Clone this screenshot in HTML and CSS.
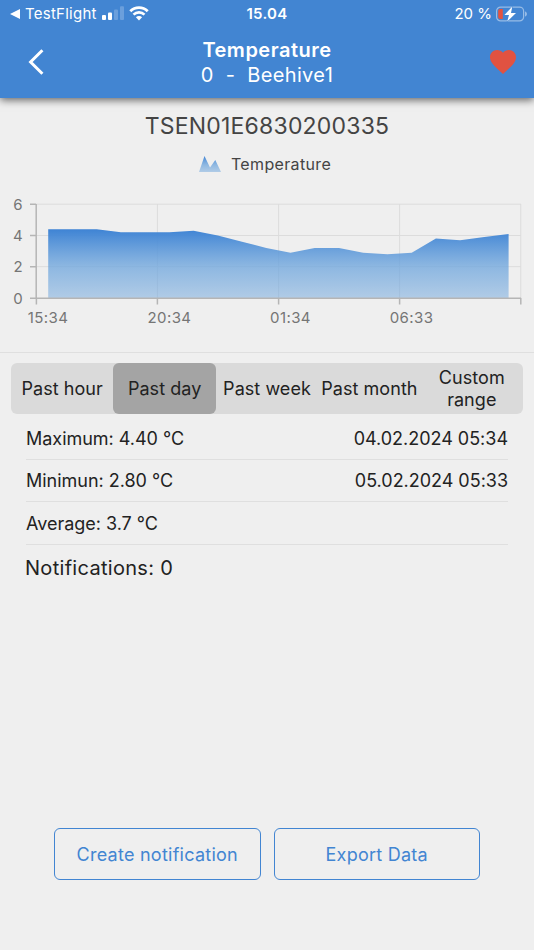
FILE: index.html
```html
<!DOCTYPE html>
<html lang="en">
<head>
  <meta charset="UTF-8" />
  <meta name="viewport" content="width=device-width, initial-scale=1.0"/>
  <title>Temperature - Beehive1</title>
  <link rel="stylesheet" href="styles.css">
</head>
<body>
  <header class="app-header">
    <div class="status-bar">
      <div class="status-left">
        <svg class="back-app" width="10" height="10" viewBox="0 0 10 10"><path d="M0 5L10 0V10Z" fill="#fff"/></svg>
        <span class="carrier">TestFlight</span>
        <svg class="signal" width="23" height="15" viewBox="0 0 23 15">
          <rect x="0" y="9" width="4" height="5" rx="1" fill="#fff"/>
          <rect x="6" y="6.500" width="4" height="7.500" rx="1" fill="#fff"/>
          <rect x="12" y="3.500" width="4" height="10.500" rx="1" fill="#fff" opacity=".22"/>
          <rect x="18" y="0.300" width="4" height="13.700" rx="1" fill="#fff" opacity=".22"/>
        </svg>
        <svg class="wifi" width="20" height="15" viewBox="0 0 20 15">
          <path d="M1.300 5.200A12.300 12.300 0 0 1 18.700 5.200" fill="none" stroke="#fff" stroke-width="2.800"/>
          <path d="M4.500 8.700A7.700 7.700 0 0 1 15.500 8.700" fill="none" stroke="#fff" stroke-width="2.600"/>
          <path d="M6.900 11.300A4.400 4.400 0 0 1 13.100 11.300L10 14.400Z" fill="#fff"/>
        </svg>
      </div>
      <div class="clock">15.04</div>
      <div class="status-right">
        <span>20 %</span>
        <svg class="battery" width="32" height="16" viewBox="0 0 32 16">
          <rect x="0.600" y="1.100" width="27" height="13.800" rx="4" fill="none" stroke="#fff" stroke-opacity=".45" stroke-width="1.200"/>
          <path d="M29 5.300Q31 6.200 31 8T29 10.700Z" fill="#fff" opacity=".45"/>
          <path d="M4 3H6.800V13H4A1.800 1.800 0 0 1 2.200 11.200V4.800A1.800 1.800 0 0 1 4 3Z" fill="#e4533f"/>
          <path d="M16.300 0.600L8.400 9H13L11.200 15.600L20 6.900H15Z" fill="#fff" stroke="#4285d2" stroke-width="1" paint-order="stroke"/>
        </svg>
      </div>
    </div>
    <div class="nav-bar">
      <svg class="back" width="18" height="26" viewBox="0 0 18 26"><path d="M15.400 1.200L3.600 13L15.400 24.800" fill="none" stroke="#fff" stroke-width="3"/></svg>
      <div class="nav-title">
        <h1>Temperature</h1>
        <p>0&nbsp; -&nbsp; Beehive1</p>
      </div>
      <svg class="heart" width="26" height="24" viewBox="2 3 20 18.350"><path d="M12 21.350l-1.450-1.320C5.400 15.360 2 12.280 2 8.500 2 5.420 4.420 3 7.500 3c1.740 0 3.410.81 4.500 2.090C13.090 3.810 14.760 3 16.500 3 19.580 3 22 5.420 22 8.500c0 3.780-3.400 6.860-8.550 11.540L12 21.350z" fill="#e15241"/></svg>
    </div>
  </header>

  <main>
    <section class="chart-section">
      <h2>TSEN01E6830200335</h2>
      <div class="legend">
        <svg width="22" height="16" viewBox="0 0 22 16"><path d="M0 16L5.500 0L11 11.500L16.300 4L22 16Z" fill="url(#area)"/></svg>
        <span>Temperature</span>
      </div>
      <svg class="chart" width="534" height="150" viewBox="0 190 534 150">
        <defs>
          <linearGradient id="area" x1="0" y1="0" x2="0" y2="1">
            <stop offset="0" stop-color="#3e83d4"/>
            <stop offset=".55" stop-color="#6fa6dd" stop-opacity=".76"/>
            <stop offset="1" stop-color="#6fa6dd" stop-opacity=".49"/>
          </linearGradient>
        </defs>
        <path class="grid" d="M36 204.200H521M36 235.500H521M36 266.700H521M157.400 204V298M278.600 204V298M399.600 204V298M520.800 204V298"/>
        <path fill="url(#area)" d="M48.200 298V229.200L72.400 229.200L96.700 229.200L120.900 232.300L145.100 232.300L169.400 232.300L193.600 230.800L217.800 235.500L242 241.700L266.300 248L290.500 252.700L314.700 248L339 248L363.200 252.700L387.400 254.200L411.700 252.700L435.900 238.600L460.100 240.200L484.300 237L508.600 233.900V298Z"/>
        <path class="axis" d="M36.200 204V298.300M30 204.200H36M30 235.500H36M30 266.700H36M30 298.200H521M36.400 298V304.500M157.400 298V304.500M278.600 298V304.500M399.600 298V304.500M520.800 298V304.500"/>
        <g class="y-labels">
          <text x="23" y="209.500">6</text>
          <text x="23" y="241">4</text>
          <text x="23" y="272.300">2</text>
          <text x="23" y="303.500">0</text>
        </g>
        <g class="x-labels">
          <text x="48" y="323">15:34</text>
          <text x="169.500" y="323">20:34</text>
          <text x="290.500" y="323">01:34</text>
          <text x="411.500" y="323">06:33</text>
        </g>
      </svg>
    </section>

    <div class="segments">
      <button>Past hour</button>
      <button class="active">Past day</button>
      <button>Past week</button>
      <button>Past month</button>
      <button>Custom range</button>
    </div>

    <div class="stats">
      <div class="stat"><span>Maximum: 4.40 °C</span><span>04.02.2024 05:34</span></div>
      <div class="stat"><span>Minimun: 2.80 °C</span><span>05.02.2024 05:33</span></div>
      <div class="stat"><span>Average: 3.7 °C</span></div>
    </div>
    <p class="notifications">Notifications: 0</p>
  </main>

  <footer class="actions">
    <button>Create notification</button>
    <button>Export Data</button>
  </footer>
</body>
</html>
```
FILE: styles.css
```css
:root {
  --primary: #4285d2;
  --bg: #efefef;
  --line: #dfdfdf;
}

* {
  margin: 0;
  padding: 0;
  box-sizing: border-box;
}

body {
  font-family: Inter, "Liberation Sans", sans-serif;
  background: var(--bg);
  color: #222;
  display: flex;
  flex-direction: column;
  height: 950px;
  overflow: hidden;
}

button {
  font: inherit;
  letter-spacing: inherit;
  color: inherit;
  background: none;
  border: none;
}

svg {
  display: block;
  flex: none;
}

.app-header {
  height: 98px;
  background: var(--primary);
  color: white;
  box-shadow: 0 2px 8px rgba(0, 0, 0, 0.6);
}

.status-bar {
  display: grid;
  grid-template-columns: 1fr auto 1fr;
  align-items: center;
  height: 27px;
  padding: 0 6px;
  font-size: 15px;
}

.status-left,
.status-right {
  display: flex;
  align-items: center;
}

.status-left {
  padding-left: 4px;
}

.carrier {
  margin: 0 5px;
  letter-spacing: 0.25px;
}

.wifi {
  margin-left: 4px;
}

.clock {
  font-weight: 600;
  letter-spacing: 0.3px;
}

.status-right {
  justify-content: flex-end;
  gap: 4px;
}

.nav-bar {
  display: grid;
  grid-template-columns: 1fr auto 1fr;
  align-items: center;
  height: 70px;
  padding: 0 18px;
}

.back {
  margin-left: 9px;
}

.nav-title {
  padding-top: 1px;
  text-align: center;
}

.nav-title h1 {
  font-size: 20px;
  font-weight: 600;
  line-height: 25px;
  letter-spacing: 0.5px;
}

.nav-title p {
  font-size: 20px;
  line-height: 25px;
  letter-spacing: 0.35px;
}

.heart {
  justify-self: end;
}

.chart-section {
  height: 255px;
  border-bottom: 1px solid var(--line);
}

.chart-section h2 {
  padding-top: 13px;
  font-size: 23px;
  font-weight: 400;
  line-height: 30px;
  letter-spacing: 0.2px;
  text-align: center;
  color: #444;
}

.legend {
  display: flex;
  justify-content: center;
  align-items: center;
  gap: 10px;
  height: 49px;
  padding: 0 4px 4px 0;
  font-size: 16px;
  letter-spacing: 0.35px;
  color: #444;
}

.chart text {
  font-size: 15px;
  letter-spacing: 0.4px;
  fill: #757575;
}

.x-labels {
  text-anchor: middle;
}

.y-labels {
  text-anchor: end;
}

.grid {
  fill: none;
  stroke: #dcdcdc;
  stroke-width: 1;
}

.axis {
  fill: none;
  stroke: #b5b5b5;
  stroke-width: 1.5;
}

.segments {
  display: grid;
  grid-template-columns: repeat(5, 1fr);
  height: 51px;
  margin: 10px 11px 0;
  border-radius: 6px;
  background: #dadada;
  font-size: 18px;
  line-height: 22px;
  letter-spacing: 0.05px;
}

.segments button {
  border-radius: 6px;
}

.segments .active {
  background: #a4a4a4;
}

.stats {
  margin: 3px 26px 0;
  font-size: 18px;
  letter-spacing: -0.02px;
}

.stat {
  display: flex;
  justify-content: space-between;
  align-items: center;
  height: 42.6px;
  padding-top: 1px;
  border-bottom: 1px solid var(--line);
}

.notifications {
  margin: 10px 25px 0;
  font-size: 20px;
  line-height: 26px;
  letter-spacing: 0.3px;
}

.actions {
  display: grid;
  grid-template-columns: 1fr 1fr;
  gap: 13px;
  margin: auto 54px 70px;
  color: var(--primary);
  font-size: 18px;
  letter-spacing: 0.25px;
}

.actions button {
  height: 52px;
  border: 1.5px solid var(--primary);
  border-radius: 6px;
}
```
